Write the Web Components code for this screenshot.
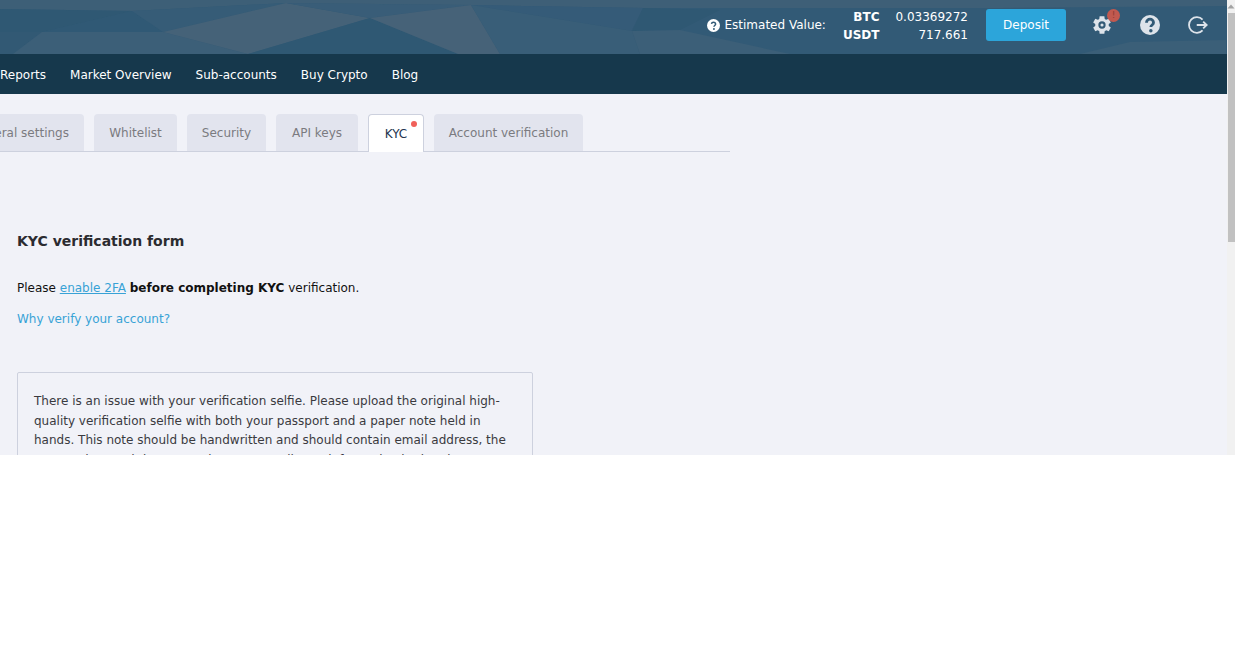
<!doctype html>
<html>
<head>
<meta charset="utf-8">
<style>
html, body { margin: 0; padding: 0; height: 100%; background: #fff; overflow: hidden; }
</style>
</head>
<body>
<app-window>
	<app-header slot="top"></app-header>
	<app-nav slot="top">
		<a>Reports</a><a>Market Overview</a><a>Sub-accounts</a><a>Buy Crypto</a><a>Blog</a>
	</app-nav>
	<settings-tabs>
		<tab-item style="width:129px">General settings</tab-item>
		<tab-item style="width:83px">Whitelist</tab-item>
		<tab-item style="width:79px">Security</tab-item>
		<tab-item style="width:82px">API keys</tab-item>
		<tab-item style="width:56px" active dot>KYC</tab-item>
		<tab-item style="width:149px">Account verification</tab-item>
	</settings-tabs>
	<kyc-form></kyc-form>
</app-window>
<script>
const FONT = '"DejaVu Sans", Verdana, sans-serif';

class AppWindow extends HTMLElement {
	constructor() {
		super();
		let shadowRoot = this.attachShadow({mode: 'open'});
		shadowRoot.innerHTML = `
		<style>
		:host {
			display: flex;
			width: 1235px;
			height: 455px;
			overflow: hidden;
			font-family: ${FONT};
			font-size: 12px;
		}
		.page {
			flex: 1;
			min-width: 0;
			background: #f1f2f8;
			overflow: hidden;
		}
		.scrollbar {
			width: 8px;
			background: #f1f1f1;
			display: flex;
			flex-direction: column;
		}
		.arrow {
			height: 13px;
			display: flex;
			align-items: center;
			justify-content: center;
		}
		.thumb {
			height: 229px;
			margin-left: 1px;
			background: #c1c1c1;
		}
		</style>
		<div class="page"><slot name="top"></slot><slot></slot></div>
		<div class="scrollbar">
			<div class="arrow"><svg width="8" height="5" viewBox="0 0 8 5"><path d="M4 0.5L7.5 4.5H0.5z" fill="#a3a3a3"/></svg></div>
			<div class="thumb"></div>
		</div>`;
	}
}
customElements.define('app-window', AppWindow);

class AppHeader extends HTMLElement {
	constructor() {
		super();
		let shadowRoot = this.attachShadow({mode: 'open'});
		shadowRoot.innerHTML = `
		<style>
		:host {
			display: block;
			position: relative;
			height: 54px;
			background: #325a76;
			color: #fff;
			overflow: hidden;
		}
		.bg {
			position: absolute;
			left: 0;
			top: 0;
		}
		.bar {
			position: relative;
			height: 100%;
			display: flex;
			align-items: center;
			justify-content: flex-end;
			padding: 0 19px 4px 0;
			box-sizing: border-box;
		}
		.est {
			display: flex;
			align-items: center;
			gap: 4px;
			margin-right: 17px;
		}
		.vals {
			display: grid;
			grid-template-columns: auto auto;
			column-gap: 16px;
			row-gap: 0;
			line-height: 18px;
			padding-top: 2px;
			text-align: right;
			margin-right: 18px;
		}
		.vals b { font-weight: 700; }
		.deposit {
			width: 80px;
			height: 32px;
			line-height: 32px;
			background: #2ca5da;
			border-radius: 3px;
			text-align: center;
			margin-right: 26px;
		}
		.icons {
			display: flex;
			align-items: center;
			gap: 28px;
		}
		.icons svg { display: block; }
		.gear { position: relative; }
		.badge {
			position: absolute;
			left: 15px;
			top: -6px;
			width: 13px;
			height: 13px;
			border-radius: 50%;
			background: #c1594f;
			color: #8e3a33;
			font-size: 9px;
			line-height: 13px;
			text-align: center;
		}
		</style>
		<svg class="bg" width="1235" height="54" viewBox="0 0 1235 54">
			<path d="M0 0H1235V54H0z" fill="#325a76"/>
			<path d="M0 0H286V3L132 11L0 9z" fill="#3d5f77"/>
			<path d="M0 9L132 11L42 32H0z" fill="#2f5873"/>
			<path d="M0 32H42L13 54H0z" fill="#325974"/>
			<path d="M42 32L132 11L163 32z" fill="#305975"/>
			<path d="M132 11L286 3L163 32z" fill="#365c77"/>
			<path d="M42 32H163L248 54H13z" fill="#3c5f78"/>
			<path d="M286 3L370 18L248 54L163 32z" fill="#456278"/>
			<path d="M286 3L471 5L370 18z" fill="#395d78"/>
			<path d="M248 54L370 18L458 54z" fill="#2f5873"/>
			<path d="M370 18L471 5L500 54H458z" fill="#466278"/>
			<path d="M286 0H1235V6L1000 8L643 8L471 5L286 3z" fill="#3e5f77"/>
			<path d="M471 5L643 8L632 31z" fill="#355b78"/>
			<path d="M471 5L632 31L640 54H500z" fill="#395e78"/>
			<path d="M632 31L643 8L720 10L680 30z" fill="#2f5873"/>
			<path d="M680 30L790 54H640L632 31z" fill="#3c5f78"/>
			<path d="M1130 42L1226 40V54H1080z" fill="#3b5f78"/>
		</svg>
		<div class="bar">
			<div class="est">
				<svg width="13" height="13" viewBox="0 0 24 24"><circle cx="12" cy="12" r="12" fill="#fff"/><path d="M8.2 9.2a3.9 3.9 0 0 1 7.7 0c0 2.6-3.1 2.8-3.1 5" fill="none" stroke="#325a76" stroke-width="2.8"/><circle cx="12.8" cy="18.4" r="1.8" fill="#325a76"/></svg>
				<span>Estimated Value:</span>
			</div>
			<div class="vals">
				<b>BTC</b><span>0.03369272</span>
				<b>USDT</b><span>717.661</span>
			</div>
			<div class="deposit">Deposit</div>
			<div class="icons">
				<div class="gear">
					<svg width="20" height="20" viewBox="1 1 22 22"><path fill="#dde3ea" fill-rule="evenodd" d="M19.4 13a7.5 7.5 0 0 0 0-2l2.3-1.8-2.3-4-2.7 1.1a7.6 7.6 0 0 0-1.7-1L14.6 2.4H9.4L9 5.3a7.6 7.6 0 0 0-1.7 1L4.6 5.2l-2.3 4L4.6 11a7.5 7.5 0 0 0 0 2l-2.3 1.8 2.3 4 2.7-1.1a7.6 7.6 0 0 0 1.7 1l.4 2.9h5.2l.4-2.9a7.6 7.6 0 0 0 1.7-1l2.7 1.1 2.3-4zM12 16a4 4 0 1 1 0-8 4 4 0 0 1 0 8z"/><circle cx="12" cy="12" r="1.7" fill="#dde3ea"/></svg>
					<span class="badge">!</span>
				</div>
				<svg width="20" height="20" viewBox="0 0 24 24"><circle cx="12" cy="12" r="12" fill="#dde3ea"/><path d="M7.8 9.2a4.2 4.2 0 0 1 8.4 0c0 2.8-3.2 2.8-3.2 5.2" fill="none" stroke="#325a76" stroke-width="3.4"/><circle cx="13" cy="19" r="2.1" fill="#325a76"/></svg>
				<svg width="20" height="20" viewBox="0 0 24 24"><path d="M17.5 5.6A9.4 9.4 0 1 0 17.5 18.4" fill="none" stroke="#dde3ea" stroke-width="2.2"/><path d="M10.5 12H22M18.2 8L22.4 12L18.2 16" fill="none" stroke="#dde3ea" stroke-width="2.2"/></svg>
			</div>
		</div>`;
	}
}
customElements.define('app-header', AppHeader);

class AppNav extends HTMLElement {
	constructor() {
		super();
		let shadowRoot = this.attachShadow({mode: 'open'});
		shadowRoot.innerHTML = `
		<style>
		:host {
			display: flex;
			align-items: center;
			gap: 24px;
			height: 40px;
			padding-top: 1px;
			box-sizing: border-box;
			background: #16384c;
			color: #fff;
		}
		::slotted(a) { color: #fff; }
		</style>
		<slot></slot>`;
	}
}
customElements.define('app-nav', AppNav);

class SettingsTabs extends HTMLElement {
	constructor() {
		super();
		let shadowRoot = this.attachShadow({mode: 'open'});
		shadowRoot.innerHTML = `
		<style>
		:host {
			display: flex;
			align-items: flex-start;
			gap: 10px;
			width: 775px;
			height: 37px;
			margin-top: 20px;
			margin-left: -45px;
			border-bottom: 1px solid #cdd1de;
		}
		</style>
		<slot></slot>`;
	}
}
customElements.define('settings-tabs', SettingsTabs);

class TabItem extends HTMLElement {
	constructor() {
		super();
		let shadowRoot = this.attachShadow({mode: 'open'});
		shadowRoot.innerHTML = `
		<style>
		:host {
			display: block;
			position: relative;
			box-sizing: border-box;
			flex: none;
			height: 37px;
			line-height: 38px;
			text-align: center;
			background: #e2e4ee;
			color: #7b7b80;
			border-radius: 4px 4px 0 0;
		}
		:host([active]) {
			background: #fff;
			color: #24344f;
			height: 38px;
			border: 1px solid #cdd1de;
			border-bottom: 0;
		}
		.dot {
			display: none;
			position: absolute;
			top: 6px;
			right: 6px;
			width: 6px;
			height: 6px;
			border-radius: 50%;
			background: #f0605a;
		}
		:host([dot]) .dot { display: block; }
		</style>
		<slot></slot><span class="dot"></span>`;
	}
}
customElements.define('tab-item', TabItem);

class KycForm extends HTMLElement {
	constructor() {
		super();
		let shadowRoot = this.attachShadow({mode: 'open'});
		shadowRoot.innerHTML = `
		<style>
		:host {
			display: block;
			padding: 80px 0 0 17px;
			color: #111;
		}
		h2 {
			margin: 0 0 29px;
			font-size: 14px;
			line-height: 18px;
			color: #2b2b30;
		}
		p { margin: 0 0 13px; line-height: 18px; }
		a { color: #38a2d6; }
		.why { text-decoration: none; }
		.note {
			width: 516px;
			box-sizing: border-box;
			margin-top: 44px;
			padding: 19.4px 16px;
			border: 1px solid #cdd1de;
			border-radius: 2px;
			color: #3a3a3f;
			line-height: 19.4px;
		}
		</style>
		<h2>KYC verification form</h2>
		<p>Please <a href="#">enable 2FA</a> <b>before completing KYC</b> verification.</p>
		<p><a class="why" href="#">Why verify your account?</a></p>
		<div class="note">There is an issue with your verification selfie. Please upload the original high-quality verification selfie with both your passport and a paper note held in hands. This note should be handwritten and should contain email address, the current date and the "Sumsub" text as well. Any information in the photo must be clearly readable.</div>`;
	}
}
customElements.define('kyc-form', KycForm);
</script>
</body>
</html>
